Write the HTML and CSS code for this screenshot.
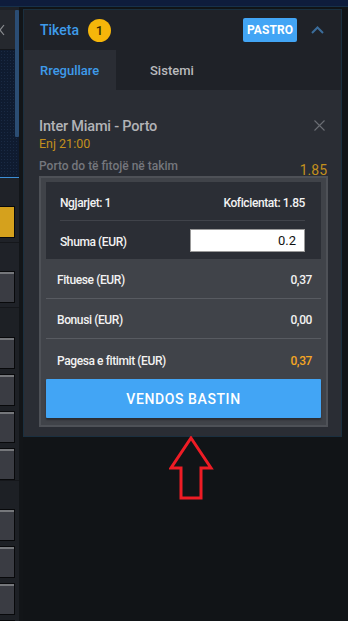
FILE: index.html
```html
<!DOCTYPE html>
<html>
<head>
<meta charset="utf-8">
<link rel="stylesheet" href="styles.css">
</head>
<body>
<div class="topbar"></div>
<div class="layout">
  <aside class="sidebar">
    <div class="sb-scroll"></div>
    <div class="sb-head">
      <svg class="sb-x" width="6" height="12" viewBox="0 0 6 12"><path d="M-4 1 L4 11 M4 1 L-4 11" stroke="#8a8c90" stroke-width="1.2"/></svg>
    </div>
    <div class="sb-blue"></div>
    <div class="sb-sec sb-sec1"><div class="sb-btn sb-yellow"></div></div>
    <div class="sb-sec sb-sec2"><div class="sb-btn"></div></div>
    <div class="sb-sec sb-sec3">
      <div class="sb-btn"></div><div class="sb-btn"></div><div class="sb-btn"></div><div class="sb-btn"></div>
    </div>
    <div class="sb-sec sb-sec4">
      <div class="sb-btn"></div><div class="sb-btn"></div><div class="sb-btn"></div><div class="sb-btn"></div>
    </div>
  </aside>
  <div class="gutter"></div>
  <div class="right">
    <section class="panel">
      <header class="p-head">
        <div class="p-title">Tiketa <span class="badge">1</span></div>
        <div class="p-actions">
          <button class="pastro">PASTRO</button>
          <svg class="chev" width="13" height="8" viewBox="0 0 13 8"><polyline points="1,7 6.5,1.5 12,7" fill="none" stroke="#3b6d9b" stroke-width="2"/></svg>
        </div>
      </header>
      <nav class="tabs">
        <div class="tab active">Rregullare</div>
        <div class="tab">Sistemi</div>
      </nav>
      <div class="content">
        <div class="match">
          <div class="m-name">Inter Miami - Porto</div>
          <svg class="close" width="11" height="11" viewBox="0 0 11 11"><path d="M0.5 0.5 L10.5 10.5 M10.5 0.5 L0.5 10.5" stroke="#6b6e74" stroke-width="1.1"/></svg>
        </div>
        <div class="m-time">Enj 21:00</div>
        <div class="pick">
          <span class="pick-name">Porto do të fitojë në takim</span>
          <span class="pick-odd">1.85</span>
        </div>
        <div class="card">
          <div class="card-top">
            <div class="row top-row first">
              <span>Ngjarjet: 1</span>
              <span>Koficientat: 1.85</span>
            </div>
            <div class="row top-row">
              <span>Shuma (EUR)</span>
              <span class="input">0.2</span>
            </div>
          </div>
          <div class="row sum-row"><span>Fituese (EUR)</span><span>0,37</span></div>
          <div class="row sum-row"><span>Bonusi (EUR)</span><span>0,00</span></div>
          <div class="row sum-row last"><span>Pagesa e fitimit (EUR)</span><span class="gold">0,37</span></div>
          <button class="place">VENDOS BASTIN</button>
        </div>
      </div>
    </section>
    <svg class="arrow" width="46" height="64" viewBox="0 0 46 64"><polygon points="22,2 42,32 32,32 32,62 12,62 12,32 2,32" fill="none" stroke="#ee1c25" stroke-width="3" stroke-linejoin="miter"/></svg>
  </div>
</div>
</body>
</html>
```
FILE: styles.css
```css
* { box-sizing: border-box; }
html, body { margin: 0; padding: 0; }
body {
  width: 348px;
  height: 621px;
  overflow: hidden;
  background: #111417;
  font-family: Roboto, "Liberation Sans", sans-serif;
  color: #e6e6e6;
}
.topbar {
  height: 7px;
  background: #0e1c3c;
  border-bottom: 1px solid #17304a;
}
.layout {
  display: flex;
  height: 614px;
}
.sidebar {
  position: relative;
  width: 19px;
  padding-top: 3px;
  background: #1e2127;
  display: flex;
  flex-direction: column;
  overflow: hidden;
}
.sb-scroll {
  position: absolute;
  left: 15px;
  top: 3px;
  width: 4px;
  height: 127px;
  background: #2b4d74;
  border-radius: 1px;
}
.sb-head {
  flex: none;
  height: 40px;
  background: #25282e;
  border-bottom: 1px solid #14161a;
  padding-top: 14px;
}
.sb-x { display: block; }
.sb-blue {
  flex: none;
  height: 128px;
  background-color: #0f1b30;
  background-image: radial-gradient(#1a2a44 0.6px, transparent 0.8px);
  background-size: 3px 3px;
  border-bottom: 1px solid #3d8fd6;
}
.sb-sec {
  flex: none;
  display: flex;
  flex-direction: column;
  gap: 5px;
  padding-top: 28px;
  border-bottom: 1px solid #15171b;
  background: #1f2228;
}
.sb-sec1 { height: 65px; }
.sb-sec2 { height: 65px; }
.sb-sec3 { height: 173px; padding-top: 29px; background: #1d2025; }
.sb-sec4 { flex: 1; padding-top: 28px; border-bottom: none; background: #1d2025; }
.sb-btn {
  width: 15px;
  height: 32px;
  flex: none;
  background: #3a3c43;
  border: 1px solid #08090b;
  border-left: none;
  box-shadow: inset 0 2px 0 #75777b;
}
.sb-yellow {
  background: #d5a11d;
  box-shadow: none;
}
.gutter {
  width: 4px;
  background: #121518;
}
.right {
  width: 325px;
  display: flex;
  flex-direction: column;
  align-items: flex-start;
}
.panel {
  margin-top: 2px;
  width: 319px;
  height: 428px;
  background: #2a2d34;
  border: 1px solid #1a2f3f;
  display: flex;
  flex-direction: column;
}
.p-head {
  height: 40px;
  background: #1f2228;
  display: flex;
  align-items: center;
  justify-content: space-between;
  padding: 0 17px 0 16px;
}
.p-title {
  display: flex;
  align-items: center;
  font-size: 14px;
  color: #3e9bea;
  font-weight: 500;
}
.badge {
  margin-left: 9px;
  width: 23px;
  height: 23px;
  border-radius: 50%;
  background: #f6b60a;
  color: #3a2c00;
  font-size: 13px;
  font-weight: 500;
  display: flex;
  align-items: center;
  justify-content: center;
}
.p-actions {
  display: flex;
  align-items: center;
  gap: 14px;
}
.pastro {
  width: 54px;
  height: 24px;
  border: none;
  border-radius: 2px;
  background: #42a5f5;
  color: #fff;
  font-family: inherit;
  font-size: 12px;
  font-weight: 700;
  padding: 0;
  letter-spacing: 0.1px;
}
.chev { display: block; }
.tabs {
  display: flex;
  height: 40px;
  background: #1f2228;
}
.tab {
  display: flex;
  align-items: center;
  font-size: 13px;
  font-weight: 500;
  color: #b9babd;
  padding-left: 34px;
}
.tab.active {
  width: 92px;
  padding-left: 16px;
  background: #2a2d34;
  color: #3e9bea;
}
.content {
  flex: 1;
  padding: 27px 14px 0 15px;
  display: flex;
  flex-direction: column;
}
.match {
  display: flex;
  justify-content: space-between;
  align-items: center;
  height: 19px;
}
.m-name {
  font-size: 14.5px;
  font-weight: 500;
  color: #b2b3b7;
  letter-spacing: -0.2px;
}
.close { margin-right: 2px; margin-top: -3px; }
.m-time {
  font-size: 12.5px;
  color: #c3901d;
  height: 16px;
  line-height: 16px;
}
.pick {
  margin-top: 4px;
  height: 20px;
  display: flex;
  justify-content: space-between;
  align-items: flex-start;
}
.pick-name {
  font-size: 12px;
  color: #75777d;
  font-weight: 500;
  line-height: 14px;
  margin-top: 3px;
}
.pick-odd {
  font-size: 14px;
  color: #c3901d;
  line-height: 14px;
  margin-top: 7px;
}
.card {
  width: 289px;
  background: #404349;
  border: 2px solid #4e5157;
  padding: 4px 5px 7px 5px;
  display: flex;
  flex-direction: column;
}
.row {
  display: flex;
  justify-content: space-between;
  align-items: center;
  font-size: 12px;
  font-weight: 500;
  letter-spacing: -0.4px;
  color: #f2f2f2;
  padding-top: 3px;
}
.card-top {
  background: #2b2e35;
  padding: 0 16px 0 14px;
}
.top-row { height: 38px; }
.top-row.first {
  height: 39px;
  border-bottom: 1px solid #40434a;
}
.input {
  width: 115px;
  height: 23px;
  background: #fff;
  border: 1px solid #999;
  color: #111;
  font-size: 13px;
  font-weight: 400;
  letter-spacing: 0;
  display: flex;
  align-items: center;
  justify-content: flex-end;
  padding-right: 8px;
  margin-top: -3px;
}
.sum-row {
  height: 40px;
  padding: 3px 9px 0 11px;
  border-bottom: 1px solid #585b61;
}
.sum-row.last { border-bottom: none; }
.gold { color: #f5a623; }
.place {
  height: 39px;
  border: none;
  border-radius: 1px;
  background: #42a5f5;
  color: #fff;
  font-family: inherit;
  font-size: 14px;
  font-weight: 500;
  letter-spacing: 0.6px;
  box-shadow: 0 2px 2px rgba(0,0,0,0.35);
}
.arrow {
  display: block;
  margin-left: 146px;
  margin-top: -1px;
}
```
